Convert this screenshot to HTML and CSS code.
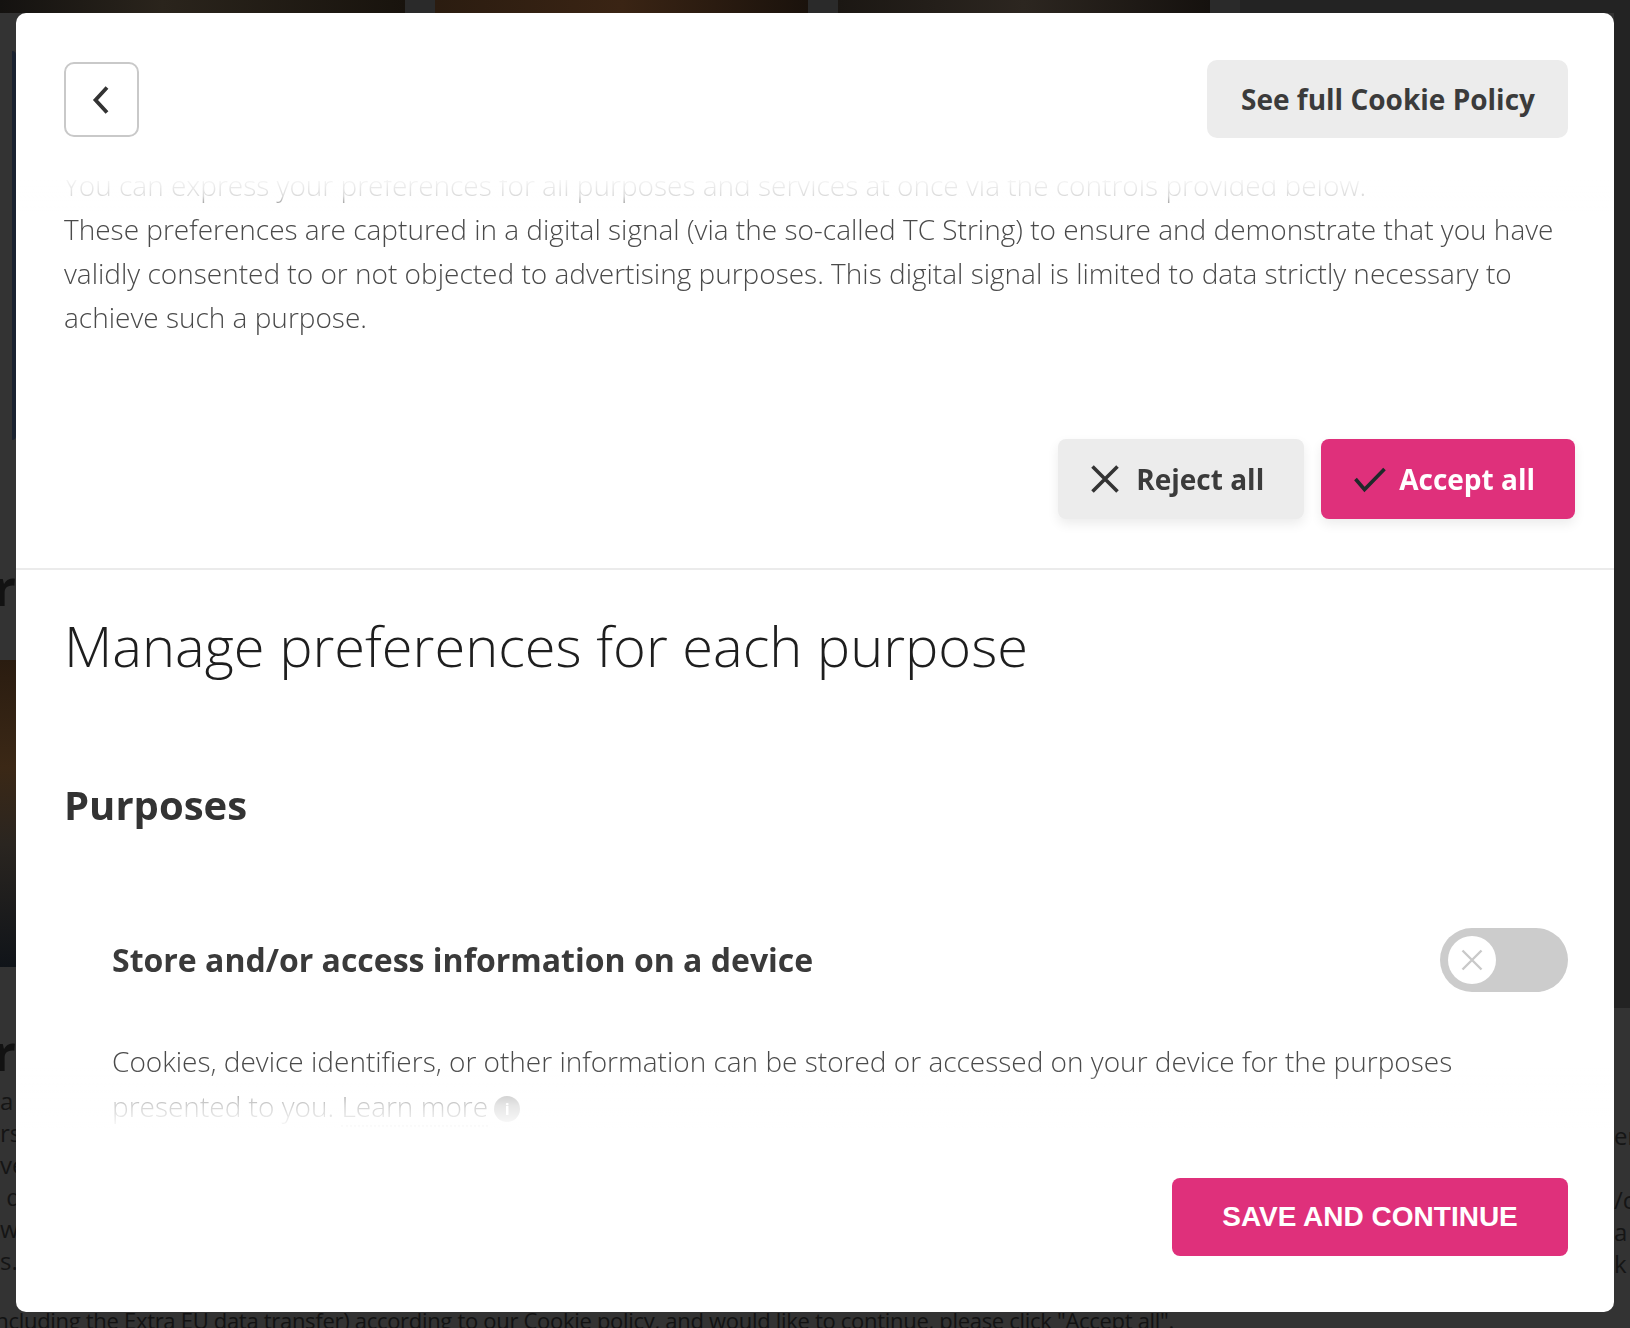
FILE: index.html
```html
<!DOCTYPE html>
<html lang="en">
<head>
<meta charset="utf-8">
<title>Cookie preferences</title>
<link rel="stylesheet" href="styles.css">
</head>
<body>
<div class="page">
  <div class="strip">
    <div class="shot shot-a"></div>
    <div class="shot shot-b"></div>
    <div class="shot shot-c"></div>
    <div class="shot shot-d"></div>
  </div>
  <div class="left-col">
    <div class="card-edge"></div>
    <div class="big-word">Our partner</div>
    <div class="photo-edge"></div>
    <div class="big-word">Your partner</div>
    <div class="frag-lines">
      <div>a</div><div>rs</div><div>ve</div><div>&nbsp;d</div><div>w</div><div>s.</div>
    </div>
  </div>
  <div class="mid"></div>
  <div class="right-col">
    <div class="dark-edge"></div>
    <div class="frag-lines right">
      <div>er</div><div>&nbsp;</div><div>/c</div><div>a</div><div>k</div><div>&nbsp;</div>
    </div>
  </div>
  <div class="bottom-line">including the Extra EU data transfer) according to our Cookie policy, and would like to continue, please click "Accept all".</div>
</div>

<div class="modal" role="dialog" aria-label="Cookie preferences">
  <header class="modal-head">
    <button class="back-btn" aria-label="Back">
      <svg width="32" height="32" viewBox="0 0 32 32" aria-hidden="true"><path d="M21 3.5 L9.5 16 L21 28.5" fill="none" stroke="#333" stroke-width="3.8"/></svg>
    </button>
    <button class="policy-btn">See full Cookie Policy</button>
  </header>

  <div class="modal-body">
    <div class="scroll">
      <p class="intro">You can express your preferences for all purposes and services at once via the controls provided below.</p>
      <p class="intro">These preferences are captured in a digital signal (via the so-called TC String) to ensure and demonstrate that you have validly consented to or not objected to advertising purposes. This digital signal is limited to data strictly necessary to achieve such a purpose.</p>

      <div class="bulk-actions">
        <button class="btn btn-reject">
          <svg width="30" height="30" viewBox="0 0 30 30" aria-hidden="true"><path d="M2.5 2.5 L27.5 27.5 M27.5 2.5 L2.5 27.5" fill="none" stroke="#333" stroke-width="3.6"/></svg>
          <span>Reject all</span>
        </button>
        <button class="btn btn-accept">
          <svg width="34" height="28" viewBox="0 0 34 28" aria-hidden="true"><path d="M2.5 14 L11.5 24.5 L31.5 4" fill="none" stroke="#1e2a2a" stroke-width="3.6"/></svg>
          <span>Accept all</span>
        </button>
      </div>

      <hr class="sep">

      <section class="manage">
        <h2 class="manage-title">Manage preferences for each purpose</h2>
        <h3 class="group-title">Purposes</h3>
        <div class="purpose">
          <div class="purpose-row">
            <h4 class="purpose-name">Store and/or access information on a device</h4>
            <div class="toggle" role="switch" aria-checked="false">
              <span class="knob">
                <svg width="22" height="22" viewBox="0 0 22 22" aria-hidden="true"><path d="M1.5 1.5 L20.5 20.5 M20.5 1.5 L1.5 20.5" fill="none" stroke="#c9c9c9" stroke-width="2.4"/></svg>
              </span>
            </div>
          </div>
          <p class="purpose-desc">Cookies, device identifiers, or other information can be stored or accessed on your device for the purposes presented to you. <span class="learn">Learn more</span><span class="info">i</span></p>
        </div>
      </section>
    </div>
    <div class="fade fade-top"></div>
    <div class="fade fade-bottom"></div>
  </div>

  <footer class="modal-foot">
    <button class="save-btn">SAVE AND CONTINUE</button>
  </footer>
</div>
</body>
</html>
```

FILE: styles.css
```css
* { box-sizing: border-box; }

html, body {
  margin: 0;
  padding: 0;
  height: 100%;
}

body {
  background: #333333;
  font-family: "Open Sans", "Liberation Sans", sans-serif;
  overflow: hidden;
}

/* ---------- background page (under the dimmed overlay) ---------- */
.page {
  height: 100vh;
  display: grid;
  grid-template-columns: 16px 1fr 16px;
  grid-template-rows: 13px 1fr 16px;
  overflow: hidden;
}

.strip {
  grid-column: 1 / 4;
  display: flex;
  gap: 30px;
  background: #2a2a2a;
}
.shot { height: 100%; }
.shot-a { width: 405px; background: linear-gradient(90deg, #141210, #2a241c 40%, #18130d); }
.shot-b { width: 373px; background: linear-gradient(90deg, #2b1c10, #3a2414 50%, #1a120c); }
.shot-c { width: 372px; background: linear-gradient(90deg, #1b1713, #2c2620 50%, #15110e); }
.shot-d { flex: 1; background: #232323; }

.left-col {
  overflow: hidden;
  display: flex;
  flex-direction: column;
  align-items: flex-end;
}
.card-edge {
  margin-top: 38px;
  width: 4px;
  height: 389px;
  background: #1a2230;
  border-radius: 0 6px 6px 0;
}
.big-word {
  margin-top: 120px;
  height: 54px;
  font-weight: 700;
  font-size: 50px;
  line-height: 54px;
  color: #121212;
  white-space: nowrap;
  direction: rtl;
}
.photo-edge {
  margin-top: 46px;
  width: 16px;
  height: 307px;
  background: linear-gradient(180deg, #2a1c10 0%, #3b2816 35%, #2a2520 60%, #101419 100%);
}
.left-col .big-word:nth-of-type(4) { margin-top: 58px; }

.frag-lines {
  margin-top: 6px;
  width: 16px;
  font-size: 24px;
  line-height: 32px;
  color: #151515;
  white-space: nowrap;
}
.frag-lines.right { margin-top: 112px; }

.right-col {
  overflow: hidden;
  display: flex;
  flex-direction: column;
}
.dark-edge {
  height: 1000px;
  background: #232323;
}

.bottom-line {
  grid-column: 1 / 4;
  margin: -6px 0 0 -10px;
  font-size: 22px;
  line-height: 28px;
  color: #121212;
  white-space: nowrap;
  letter-spacing: -0.3px;
}

/* ---------- modal ---------- */
.modal {
  position: fixed;
  top: 13px;
  left: 16px;
  right: 16px;
  bottom: 16px;
  background: #ffffff;
  border-radius: 10px;
  display: flex;
  flex-direction: column;
  overflow: hidden;
}

button {
  font-family: inherit;
  border: 0;
  cursor: pointer;
}

.modal-head {
  display: flex;
  justify-content: space-between;
  align-items: flex-start;
  padding: 47px 46px 42px 48px;
}

.back-btn {
  margin-top: 2px;
  width: 75px;
  height: 75px;
  background: #fff;
  border: 2px solid #c9c9c9;
  border-radius: 10px;
  display: flex;
  align-items: center;
  justify-content: center;
  padding: 0;
}

.policy-btn {
  height: 78px;
  padding: 0 33px 0 34px;
  background: #ececec;
  border-radius: 10px;
  color: #3b3b3b;
  font-weight: 700;
  font-size: 28px;
}

.modal-body {
  flex: 1;
  position: relative;
  overflow: hidden;
}

.scroll {
  margin-top: -17px;
}

.intro {
  margin: 0;
  padding: 0 46px 0 48px;
  font-weight: 300;
  font-size: 28px;
  line-height: 44px;
  color: #4a4a4a;
}

.bulk-actions {
  margin-top: 100px;
  display: flex;
  justify-content: flex-end;
  gap: 17px;
  padding-right: 39px;
}

.btn {
  height: 80px;
  display: flex;
  align-items: center;
  gap: 16px;
  padding: 0 40px 0 32px;
  border-radius: 8px;
  font-weight: 700;
  font-size: 28px;
  box-shadow: 0 5px 12px rgba(0, 0, 0, 0.08);
}
.btn-reject {
  background: #ececec;
  color: #3b3b3b;
}
.btn-accept {
  background: #df307b;
  color: #ffffff;
  gap: 12px;
}

.sep {
  margin: 49px 0 0;
  border: 0;
  height: 2px;
  background: #ebebeb;
}

.manage {
  padding: 0 46px 0 48px;
}

.manage-title {
  margin: 37px 0 0;
  font-weight: 300;
  font-size: 56px;
  line-height: 76px;
  color: #1e1e1e;
}

.group-title {
  margin: 95px 0 0;
  font-weight: 700;
  font-size: 40px;
  line-height: 54px;
  color: #333333;
}

.purpose {
  margin-top: 96px;
  padding-left: 48px;
}

.purpose-row {
  display: flex;
  align-items: center;
  justify-content: space-between;
}

.purpose-name {
  margin: 0;
  font-weight: 700;
  font-size: 32px;
  line-height: 42px;
  color: #3a3a3a;
}

.toggle {
  width: 128px;
  height: 64px;
  border-radius: 32px;
  background: #cccccc;
  padding: 8px;
  display: flex;
  align-items: center;
}

.knob {
  width: 48px;
  height: 48px;
  border-radius: 50%;
  background: #ffffff;
  display: flex;
  align-items: center;
  justify-content: center;
}

.purpose-desc {
  margin: 47px 0 0;
  padding-right: 48px;
  font-weight: 300;
  font-size: 28px;
  line-height: 45px;
  color: #4a4a4a;
}

.learn {
  border-bottom: 2px dotted #9a9a9a;
}

.info {
  display: inline-flex;
  align-items: center;
  justify-content: center;
  width: 26px;
  height: 26px;
  margin-left: 6px;
  border-radius: 50%;
  background: #9a9a9a;
  color: #ffffff;
  font-weight: 700;
  font-size: 16px;
  line-height: 1;
  vertical-align: 2px;
}

.fade {
  position: absolute;
  left: 0;
  right: 0;
  pointer-events: none;
}
.fade-top {
  top: 0;
  height: 36px;
  background: linear-gradient(180deg, rgba(255,255,255,0.95) 0%, rgba(255,255,255,0.8) 45%, rgba(255,255,255,0) 100%);
}
.fade-bottom {
  bottom: 0;
  height: 62px;
  background: linear-gradient(180deg, rgba(255,255,255,0) 0%, rgba(255,255,255,0.75) 60%, rgba(255,255,255,1) 100%);
}

.modal-foot {
  display: flex;
  justify-content: flex-end;
  padding: 48px 46px 56px;
}

.save-btn {
  width: 396px;
  height: 78px;
  border-radius: 8px;
  background: #df307b;
  color: #ffffff;
  font-family: "Liberation Sans", Arial, sans-serif;
  font-weight: 700;
  font-size: 28px;
}
```
